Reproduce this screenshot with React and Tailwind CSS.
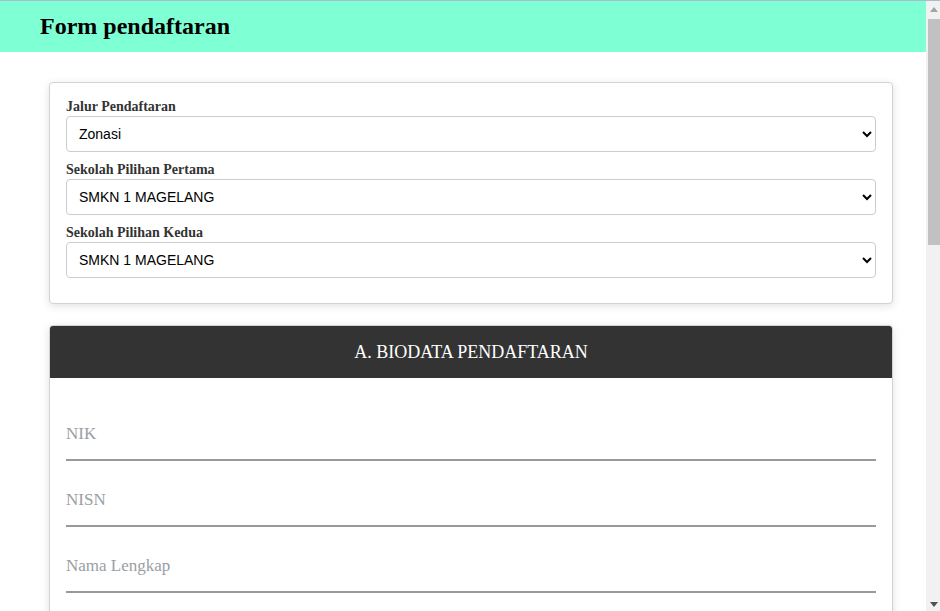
import React from 'react';

const serif = { fontFamily: '"Liberation Serif", "Times New Roman", serif' };

function Field({ label, value, options }) {
  return (
    <div className="mb-[9px]">
      <label className="block text-[14px] leading-[18px] font-bold text-[#333]" style={serif}>
        {label}
      </label>
      <select
        defaultValue={value}
        className="block w-full h-[36px] pl-[8px] pr-2 border border-[#ccc] rounded-[4px] bg-white text-[14px] text-black"
        style={{ fontFamily: '"Liberation Sans", Arial, sans-serif' }}
      >
        {options.map(o => <option key={o}>{o}</option>)}
      </select>
    </div>
  );
}

export default function App() {
  const fields = ['NIK', 'NISN', 'Nama Lengkap', 'Tempat Lahir', 'Tanggal Lahir'];
  const sekolah = ['SMKN 1 MAGELANG', 'SMKN 2 MAGELANG', 'SMKN 3 MAGELANG'];

  return (
    <div className="flex h-[611px] overflow-hidden bg-white border-t border-[#a9bcc8]">
      <div className="flex-1 overflow-hidden">
        {/* Header */}
        <div className="h-[51px] bg-[#7fffd4] flex items-center pl-[40px]">
          <h2 className="text-[24px] font-bold text-black leading-none mb-px" style={serif}>Form pendaftaran</h2>
        </div>

        {/* Pilihan sekolah */}
        <div className="ml-[49px] w-[844px] mt-[30px] border border-[#d3d3d3] rounded-[4px] bg-white shadow-[0_2px_8px_rgba(0,0,0,0.12)] px-4 pt-[15px] pb-[16px]">
          <Field label="Jalur Pendaftaran" value="Zonasi" options={['Zonasi', 'Afirmasi', 'Prestasi', 'Perpindahan Orang Tua']} />
          <Field label="Sekolah Pilihan Pertama" value="SMKN 1 MAGELANG" options={sekolah} />
          <Field label="Sekolah Pilihan Kedua" value="SMKN 1 MAGELANG" options={sekolah} />
        </div>

        {/* Biodata */}
        <div className="ml-[49px] w-[844px] mt-[21px] border border-[#d3d3d3] rounded-[4px] bg-white shadow-[0_2px_8px_rgba(0,0,0,0.12)]">
          <div className="h-[52px] bg-[#333] rounded-t-[3px] flex items-center justify-center">
            <h3 className="text-[18px] text-white" style={serif}>A. BIODATA PENDAFTARAN</h3>
          </div>
          <div className="px-4 pt-[33px] pb-8 flex flex-col gap-4">
            {fields.map(f => (
              <input
                key={f}
                placeholder={f}
                className="block w-full h-[50px] border-b-2 border-[#999] outline-none text-[17px] text-black placeholder:text-[#9a9ea3] pb-[2px]"
                style={serif}
              />
            ))}
          </div>
        </div>
      </div>

      {/* Scrollbar */}
      <div className="w-[14px] bg-[#f1f1f1] flex flex-col items-end">
        <div className="h-[17px] w-full flex items-center justify-center pl-[2px]">
          <svg width="8" height="5" viewBox="0 0 8 5"><path d="M0 5 L4 0 L8 5 Z" fill="#a3a3a3" /></svg>
        </div>
        <div className="w-[12px] h-[226px] mt-px bg-[#c1c1c1]" />
        <div className="flex-1" />
        <div className="h-[14px] w-full flex items-center justify-center pl-[2px]">
          <svg width="8" height="5" viewBox="0 0 8 5"><path d="M0 0 L8 0 L4 5 Z" fill="#505050" /></svg>
        </div>
      </div>
    </div>
  );
}
